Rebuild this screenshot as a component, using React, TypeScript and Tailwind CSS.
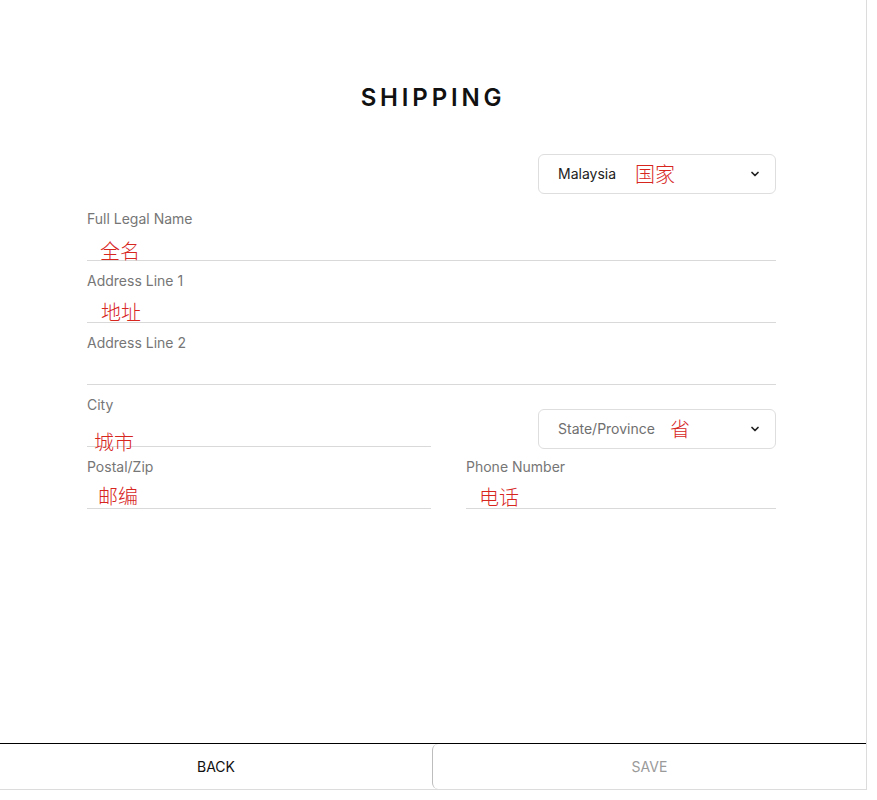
import { ChevronDown } from "lucide-react";

const cjk = "font-['Noto_Sans_CJK_SC',sans-serif] font-light text-[20px] leading-5 text-[#d7261e]";

function Field({ label, note, noteClass }: { label: string; note?: string; noteClass?: string }) {
  return (
    <div>
      <div className="text-sm leading-5 text-[#767676]">{label}</div>
      <div className="h-8 flow-root border-b border-[#d9d9d9]">
        {note && <span className={`block ${cjk} ${noteClass}`}>{note}</span>}
      </div>
    </div>
  );
}

function SelectBox({ value, note, muted }: { value: string; note: string; muted?: boolean }) {
  return (
    <div className="w-[238px] h-10 border border-[#dedede] rounded-md flex items-center pl-[19px] pr-[14px]">
      <span className={`text-sm ${muted ? "text-[#6f6f6f]" : "text-[#222]"}`}>{value}</span>
      <span className={`${cjk} ${muted ? "ml-[15px]" : "ml-[19px]"}`}>{note}</span>
      <ChevronDown className="ml-auto text-[#222]" size={12} strokeWidth={3.5} />
    </div>
  );
}

export default function App() {
  return (
    <div className="bg-white font-['Inter',sans-serif] w-[877px] h-[800px]">
      <div className="w-[867px] h-[790px] border-r border-b border-[#dcdcdc] flex flex-col">
        <h1 className="pt-[82px] text-center text-2xl leading-8 font-semibold tracking-[0.16em] text-[#111]">
          SHIPPING
        </h1>

        <div className="mx-[87px] w-[689px] mt-10">
          <div className="flex justify-end">
            <SelectBox value="Malaysia" note="国家" />
          </div>

          <div className="mt-[15px] flex flex-col gap-[10px]">
            <Field label="Full Legal Name" note="全名" noteClass="ml-[13px] mt-3" />
            <Field label="Address Line 1" note="地址" noteClass="ml-[14px] mt-[11px]" />
            <Field label="Address Line 2" />
          </div>

          <div className="mt-[10px] grid grid-cols-[344px_1fr] gap-x-[35px] gap-y-[8px]">
            <Field label="City" note="城市" noteClass="ml-[7px] mt-[17px]" />
            <div className="flex justify-end items-start pt-[14px]">
              <SelectBox value="State/Province" note="省" muted />
            </div>
            <Field label="Postal/Zip" note="邮编" noteClass="ml-[11px] mt-[9px]" />
            <Field label="Phone Number" note="电话" noteClass="ml-[13px] mt-[10px]" />
          </div>
        </div>

        <div className="mt-auto flex border-t border-black h-[46px]">
          <button className="w-[432px] text-sm text-[#111]">BACK</button>
          <button className="flex-1 text-sm text-[#9a9a9a] border-l border-[#bdbdbd] rounded-l-md">SAVE</button>
        </div>
      </div>
    </div>
  );
}
